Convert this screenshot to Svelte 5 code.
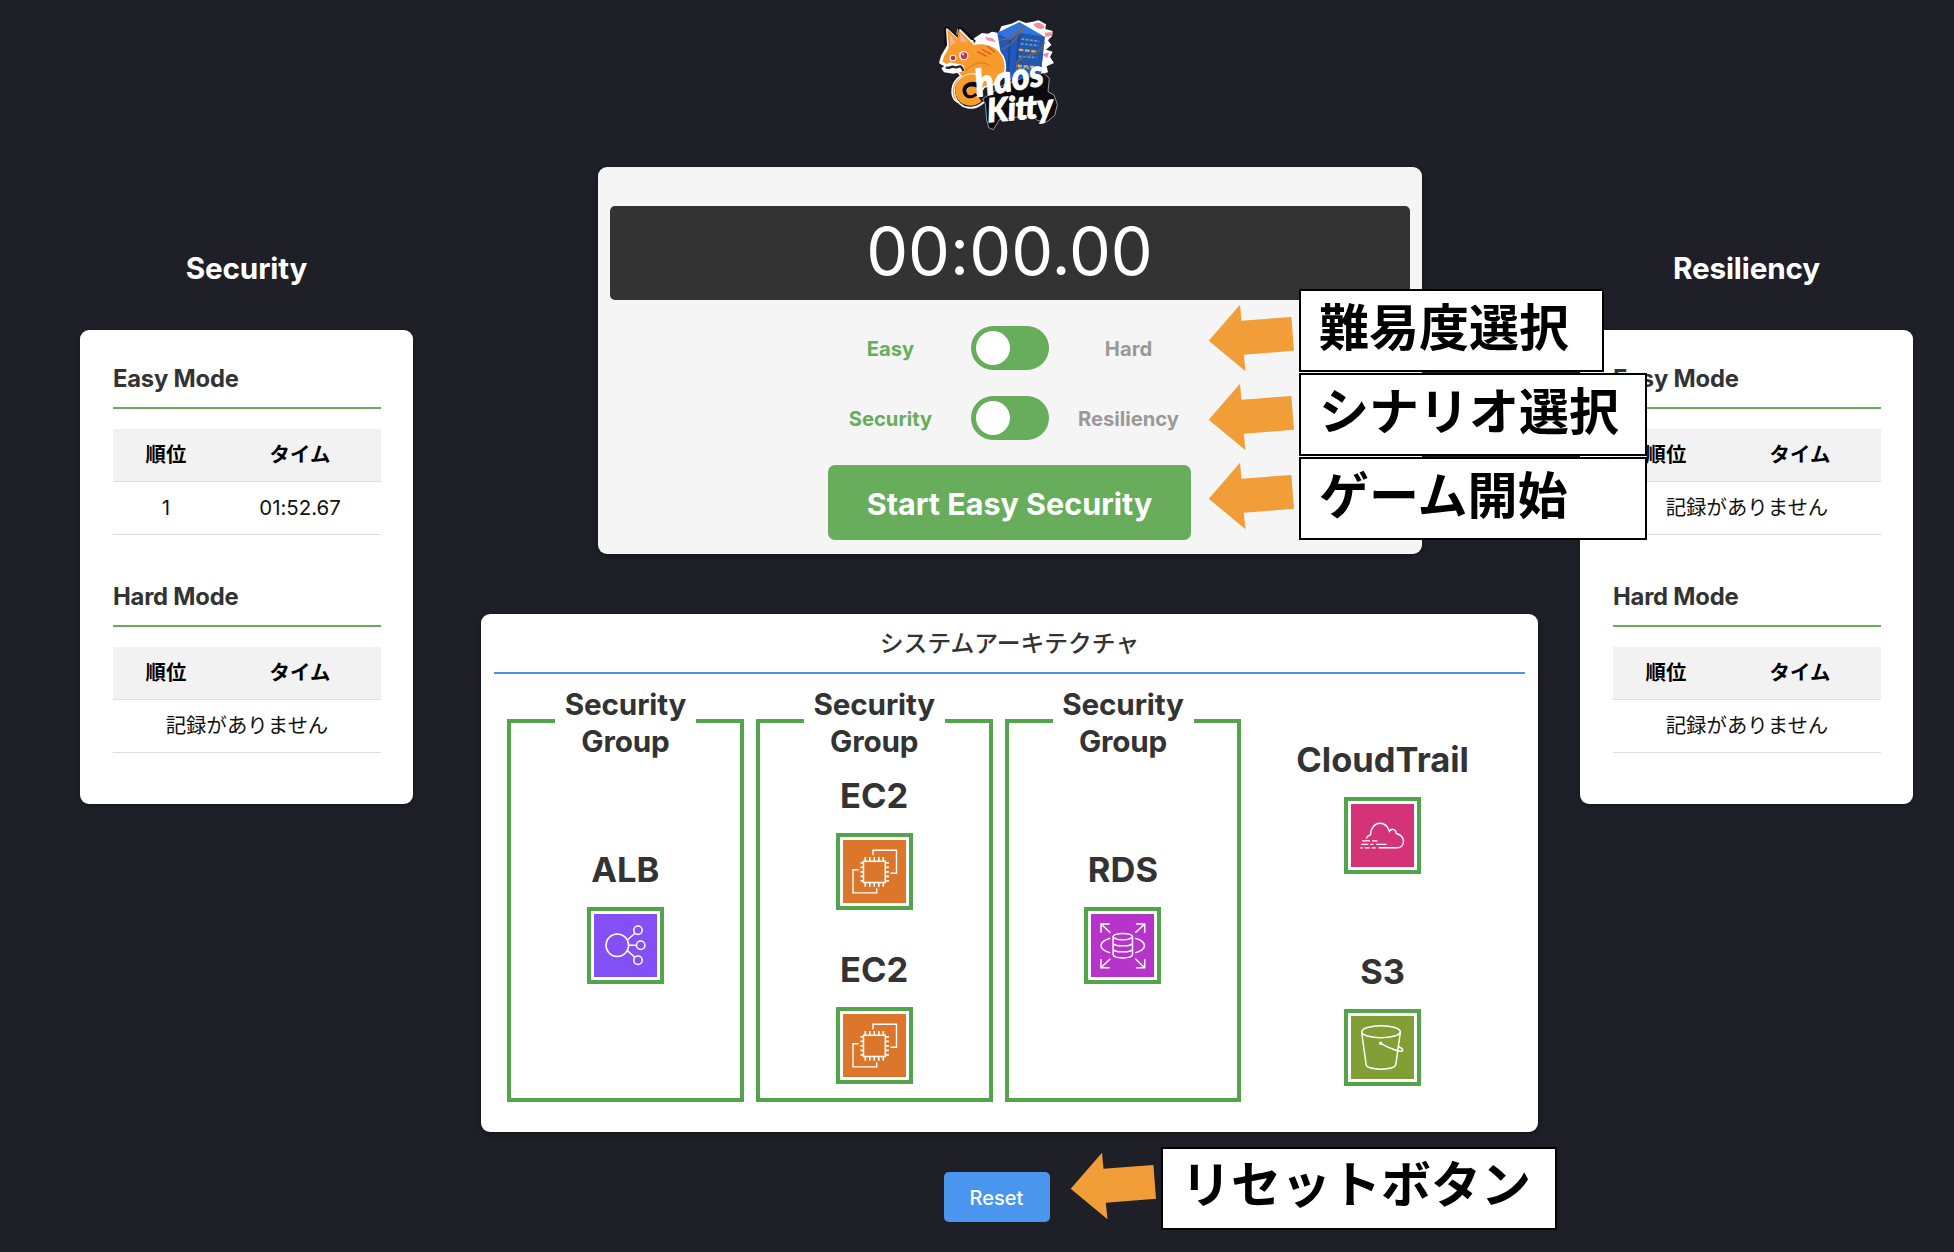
<script>
  const boards = [
    { title: 'Security', modes: [{ name: 'Easy Mode', rows: [['1', '01:52.67']] }, { name: 'Hard Mode', rows: [] }] },
    { title: 'Resiliency', modes: [{ name: 'Easy Mode', rows: [] }, { name: 'Hard Mode', rows: [] }] }
  ];
  const switches = [
    ['Easy', 'Hard'],
    ['Security', 'Resiliency']
  ];
  const groups = [['ALB'], ['EC2', 'EC2'], ['RDS']];
  const loose = ['CloudTrail', 'S3'];
  const pins = [22.3, 26.8, 31.3, 35.8, 40.3];
  const notes = [
    { text: '難易度選択', cls: 'n1' },
    { text: 'シナリオ選択', cls: 'n2' },
    { text: 'ゲーム開始', cls: 'n3' },
    { text: 'リセットボタン', cls: 'n4' }
  ];
</script>

{#snippet board(b)}
  <section class="board">
    <h2>{b.title}</h2>
    <div class="scores">
      {#each b.modes as m}
        <div class="mode">
          <h3>{m.name}</h3>
          <div class="row head"><span>順位</span><span>タイム</span></div>
          {#each m.rows as r}
            <div class="row"><span>{r[0]}</span><span>{r[1]}</span></div>
          {:else}
            <div class="row empty"><span>記録がありません</span></div>
          {/each}
        </div>
      {/each}
    </div>
  </section>
{/snippet}

{#snippet service(name)}
  <div class="service">
    <div class="name">{name}</div>
    <div class="frame">
      <svg class={name.toLowerCase()} viewBox="0 0 63 63" fill="none" stroke="#fff" stroke-width="1.5">
        {#if name === 'ALB'}
          <circle cx="23.3" cy="31.3" r="11.3" />
          <circle cx="44" cy="16.3" r="4.2" /><circle cx="46.7" cy="31.3" r="4.2" /><circle cx="44" cy="46.2" r="4.2" />
          <path d="M33.3 26l7.7-6.8M34.6 31.3h7.9M33.3 36.6l7.7 6.8" />
        {:else if name === 'EC2'}
          <rect x="20.5" y="21.3" width="21.8" height="21.2" />
          {#each pins as p}
            <path d="M{p} 17v4.3M{p} 42.5v4.3M17.5 {p + 0.6}h3M42.3 {p + 0.6}h3.6" stroke-width="1.6" />
          {/each}
          <path d="M30 15.2v-5h23.5v23h-6M15.8 29.7H10v23.2h23.7v-4.6" stroke-width="1.4" />
        {:else if name === 'RDS'}
          <ellipse cx="31.8" cy="22.6" rx="9.7" ry="3.2" />
          <path d="M22.1 22.6v18c0 4.4 19.4 4.4 19.4 0v-18M22.1 28.7c0 4.2 19.4 4.2 19.4 0M22.1 34.7c0 4.2 19.4 4.2 19.4 0" />
          <path d="M19.3 24.3c-12.4 3.6-12.4 11 0 14.6M44.2 24.3c12.4 3.6 12.4 11 0 14.6" />
          <path d="M18.7 10H10v8.7M10 10l9.3 8.7M44.9 10h8.8v8.7M53.7 10l-9.4 8.7M10 44.9v8.8h8.7M10 53.7l9.3-9M53.7 44.9v8.8h-8.8M53.7 53.7l-9.4-9" />
        {:else if name === 'CloudTrail'}
          <path d="M15.3 34.5l1.3-2.2 3-1.7c-.2-6 4-11.3 9.2-11.3 4.8 0 8.2 3.4 9.6 8 2.600-3.800 6.800-1.600 6.900 2.200 4.700 1.300 7.200 4.300 7.200 8 0 3.700-2.600 6.300-6.500 6.300H27.700" stroke-width="1.4" />
          <path d="M11 36.900h8M21 36.900h5.500M10.300 40.300h7M19.300 40.300h3M25 40.300h10.500M9.300 43.800h2.500M13.700 43.800h5M20.700 43.800h4" stroke-width="1.300" />
        {:else}
          <ellipse cx="30" cy="15.800" rx="19.300" ry="6" />
          <path d="M10.700 16.500l4.400 32c.9 6.300 28.800 6.300 29.700 0l4.500-32M29.700 27.300c6 3.700 21.500 10.300 22 7 .2-1.300-1.500-2.500-4.200-3.800" />
          <circle cx="29.700" cy="27.300" r="1" fill="#fff" />
        {/if}
      </svg>
    </div>
  </div>
{/snippet}

<div class="page">
  {@render board(boards[0])}

  <main>
    <svg class="logo" viewBox="-9 0 480 405" role="img" aria-label="Chaos Kitty">
      <path d="M186 84l18 2 12-6 20 4 8-20 30-8 22-10 22 8 20-4 18-4 22 12-2 14 22 6-2 16-12 12 10 14-16 14 20 6-8 16 12 18-22 10 4 18-28 8-120 10-50-80-10-12-10 4-2-20-14-4z" fill="#fff" />
      <path d="M340 58c10-8 28-6 32 6s-22 12-32-6zM374 84l20-4 2 12-20 4zM366 148l20-6-4 18zM194 96l24 4 10 12-26-6z" fill="#ee8da3" />
      <path d="M196 296l-8-14 60-40 90-34 32-4 18 16-4 40 18 10 10 28-8 34-26 20-26-6-20-16-94 14-18 30-14-6-6-24z" fill="#0b0b0d" stroke="#d8d8da" stroke-width="2" />
      <path d="M232 84l66-32 76 44-12 118-90 12-22-34z" fill="#1e58c0" />
      <path d="M232 84l66-32 76 44-76-12-28 22z" fill="#2f74df" />
      <path d="M298 84l76 12-12 118-78 6z" fill="#2257ad" />
      <path d="M270 106l-6 96M298 86l-12 130" stroke="#17468f" stroke-width="5" />
      <path d="M304 102l54 7M302 116l54 6M296 154l54 4M294 190l52 0" stroke="#6f9bc8" stroke-width="5" stroke-dasharray="9 4" />
      <path d="M296 134l52 6M292 182l50 4" stroke="#d7ae55" stroke-width="7" stroke-dasharray="14 5" />
      <path d="M310 62c-12 32-32 56-66 72M238 106c30-2 52-18 68-38M374 112c-20 44-50 34-82 56l-4 30" fill="none" stroke="#806344" stroke-width="4" />
      <path d="M86 122l-4-50 30 30 4-28 46 46c46-10 92 18 92 66 0 36-28 54-62 58l-24 32c-12 24-62 24-68-4-6-26 6-48 26-58l-14-18-22-8-28-16 6-20z" fill="#f79b2b" stroke="#fff" stroke-width="9" stroke-linejoin="round" />
      <path d="M76 120l0-52 8 0 30 28 2-28 10 2 40 40" fill="none" stroke="#0d0d10" stroke-width="5" />
      <path d="M86 122l-4-50 30 30 4-28 46 46c46-10 92 18 92 66 0 36-28 54-62 58l-24 32c-12 24-62 24-68-4-6-26 6-48 26-58l-14-18-22-8-6-30z" fill="#f79b2b" />
      <path d="M88 84l18 26-14 14zM120 84l22 26-20 0z" fill="#efb1af" />
      <path d="M64 190l24-18 42 8 4 18-34 8-28-4z" fill="#fff" />
      <path d="M78 186c8 8 14-4 24 0 12 6 20-14 28 12" fill="none" stroke="#23283a" stroke-width="7" />
      <circle cx="99" cy="159" r="10" fill="#fff" /><circle cx="99" cy="159" r="7" fill="#c8254f" />
      <circle cx="131" cy="152" r="14" fill="#fff" /><circle cx="132" cy="152" r="10" fill="#d02c57" />
      <circle cx="129" cy="148" r="3" fill="#fff" />
      <path d="M184 132l30 16M202 124l24 18M172 140l28 14" stroke="#e0572a" stroke-width="4" />
      <path d="M136 198c28-30 56-30 76-14" fill="none" stroke="#cf7722" stroke-width="3" />
      <path d="M174 226c-34-10-56 16-52 40 6 30 38 34 58 14" fill="none" stroke="#fff" stroke-width="38" />
      <path d="M176 232c-36-14-60 10-52 36 8 24 36 26 54 8" fill="none" stroke="#0b0b0d" stroke-width="34" />
      <path d="M174 222c-38-12-64 18-56 44 8 28 38 32 60 14" fill="none" stroke="#f79b2b" stroke-width="22" />
      <g class="brand">
        <text class="edge" transform="translate(172 276) rotate(-10)" font-size="112" textLength="206" lengthAdjust="spacingAndGlyphs">haos</text>
        <text class="edge" transform="translate(204 352) rotate(-5)" font-size="98" textLength="198" lengthAdjust="spacingAndGlyphs">Kitty</text>
      </g>
    </svg>

    <section class="card control">
      <div class="timer">00:00.00</div>
      {#each switches as s}
        <div class="switch">
          <span class="on">{s[0]}</span>
          <i class="track"></i>
          <span>{s[1]}</span>
        </div>
      {/each}
      <button class="start">Start Easy Security</button>
    </section>

    <section class="card arch">
      <h4>システムアーキテクチャ</h4>
      <div class="diagram">
        {#each groups as g}
          <div class="group" class:single={g.length === 1}>
            <div class="legend">Security Group</div>
            {#each g as name}{@render service(name)}{/each}
          </div>
        {/each}
        <div class="loose">
          {#each loose as name}{@render service(name)}{/each}
        </div>
      </div>
    </section>

    <button class="reset">Reset</button>
  </main>

  {@render board(boards[1])}

  {#each notes as n}
    <div class="note {n.cls}">
      <svg viewBox="0 0 87 68" width="87" height="68"><path d="M.7 36.700L32 .7l1.500 16L83.400 13 86 46.800l-50.200 4 1.700 16.400z" fill="#f19e39" /></svg>
      <p>{n.text}</p>
    </div>
  {/each}
</div>

<style>
  :global(body) { background: #1f1f28; }
  .page {
    position: relative;
    box-sizing: border-box;
    width: 1954px;
    height: 1252px;
    overflow: hidden;
    display: grid;
    grid-template-columns: 333px 1fr 333px;
    padding: 0 41px 0 80px;
    background: #1f1f28;
    color: #333;
    font-family: Inter, "Noto Sans CJK JP", sans-serif;
    font-feature-settings: "calt" 0;
    font-size: 20.400px;
  }
  h2, h3, h4, p { margin: 0; }
  button { border: 0; color: #fff; font-family: inherit; padding: 0; }

  .board { padding-top: 248px; }
  h2 { color: #fff; font-size: 29.700px; line-height: 41px; font-weight: 700; letter-spacing: -0.150px; text-align: center; }
  .scores {
    box-sizing: border-box;
    height: 474px;
    margin-top: 41px;
    padding: 33px 32px 0 33px;
    border-radius: 9px;
    background: #fff;
    box-shadow: 0 2px 5px rgba(0, 0, 0, 0.3);
  }
  .mode { height: 218px; }
  h3 {
    box-sizing: border-box;
    height: 46px;
    font-size: 23.800px;
    line-height: 32px;
    font-weight: 700;
    letter-spacing: -0.200px;
    border-bottom: 2px solid #67ad5b;
    margin-bottom: 20px;
  }
  .row {
    display: grid;
    grid-template-columns: 106px 1fr;
    box-sizing: border-box;
    height: 53px;
    line-height: 51px;
    border-bottom: 1px solid #ddd;
    text-align: center;
    color: #111;
  }
  .row.head { background: #f2f2f2; font-weight: 700; color: #000; }
  .row.empty { grid-template-columns: 1fr; }

  main { display: flex; flex-direction: column; align-items: center; }
  .logo { width: 160px; height: 135px; margin-top: 5px; }
  .brand { fill: #fff; font-family: Lato, sans-serif; font-weight: 900; font-style: italic; }
  .edge { stroke: #fff; stroke-width: 3px; }

  .card { box-sizing: border-box; border-radius: 9px; margin-left: 26px; box-shadow: 0 2px 6px rgba(0, 0, 0, 0.35); }
  .control {
    width: 824px;
    height: 387px;
    margin-top: 27px;
    padding: 39px 12px 0;
    background: #f5f5f5;
    display: flex;
    flex-direction: column;
    align-items: center;
  }
  .timer {
    align-self: stretch;
    height: 94px;
    line-height: 91px;
    margin-bottom: 26px;
    border-radius: 5px;
    background: #333;
    color: #fff;
    font-size: 66.500px;
    text-align: center;
  }
  .switch {
    display: grid;
    grid-template-columns: 120px 78px 120px;
    column-gap: 20px;
    height: 44px;
    margin-bottom: 26px;
    align-items: center;
    text-align: center;
    font-weight: 700;
    color: #999;
    font-size: 20.200px;
  }
  .switch .on { color: #67ad5b; }
  .track { height: 44px; border-radius: 22px; background: #67ad5b; display: flex; align-items: center; }
  .track::before { content: ""; width: 34px; height: 34px; border-radius: 50%; background: #fff; margin-left: 5px; }
  .start { width: 363px; height: 75px; margin-top: -1px; padding-top: 2px; border-radius: 7px; background: #67ad5b; font-size: 30.500px; font-weight: 700; }

  .arch { width: 1057px; height: 518px; margin-top: 60px; padding: 0 13px; background: #fff; }
  h4 {
    box-sizing: border-box;
    height: 60px;
    line-height: 60px;
    border-bottom: 2px solid #4a96ee;
    font-size: 23.800px;
    font-weight: 500;
    text-align: center;
  }
  .diagram { display: flex; gap: 12px; padding: 45px 13px 0; }
  .group {
    position: relative;
    box-sizing: border-box;
    width: 237px;
    height: 383px;
    border: 4px solid #52a54b;
    padding-top: 53px;
    display: flex;
    flex-direction: column;
    gap: 40px;
    align-items: center;
  }
  .group.single { padding-top: 127px; }
  .legend {
    position: absolute;
    top: -37px;
    left: 44px;
    width: 133px;
    padding: 0 4px;
    background: #fff;
    font-size: 29.700px;
    line-height: 37.300px;
    font-weight: 700;
    letter-spacing: -0.150px;
    text-align: center;
  }
  .loose { width: 259px; padding-top: 21px; display: flex; flex-direction: column; gap: 78px; align-items: center; }
  .service { display: flex; flex-direction: column; align-items: center; gap: 17px; }
  .name { font-size: 34.500px; line-height: 40px; font-weight: 700; }
  .frame { box-sizing: border-box; width: 77px; height: 77px; border: 4px solid #52a54b; padding: 3px; }
  .frame svg { display: block; width: 63px; height: 63px; }
  .alb { background: #8450f6; }
  .ec2 { background: #dc762b; }
  .rds { background: #b734cb; }
  .cloudtrail { background: #d43378; }
  .s3 { background: #829f35; }

  .reset { width: 106px; height: 50px; margin-top: 40px; padding-top: 1px; border-radius: 5px; background: #4a96ee; font-size: 20px; font-weight: 500; }

  /* callouts float over the dashboard */
  .note { position: absolute; display: flex; left: 1208px; }
  .note svg { margin: 15px 4px 0 0; }
  .note p {
    box-sizing: border-box;
    height: 83px;
    border: 2px solid #000;
    background: #fff;
    color: #000;
    padding-left: 18px;
    font: 700 50px/67px "Noto Sans CJK JP", sans-serif;
    white-space: nowrap;
  }
  .n1 { top: 289px; }
  .n1 p { width: 305px; }
  .n2 { top: 373px; }
  .n2 svg { margin-top: 10px; }
  .n2 p { width: 348px; }
  .n3 { top: 457px; }
  .n3 svg { margin-top: 5px; }
  .n3 p { width: 348px; }
  .n4 { top: 1147px; left: 1070px; }
  .n4 svg { margin-top: 5px; }
  .n4 p { width: 396px; line-height: 65px; }
</style>
